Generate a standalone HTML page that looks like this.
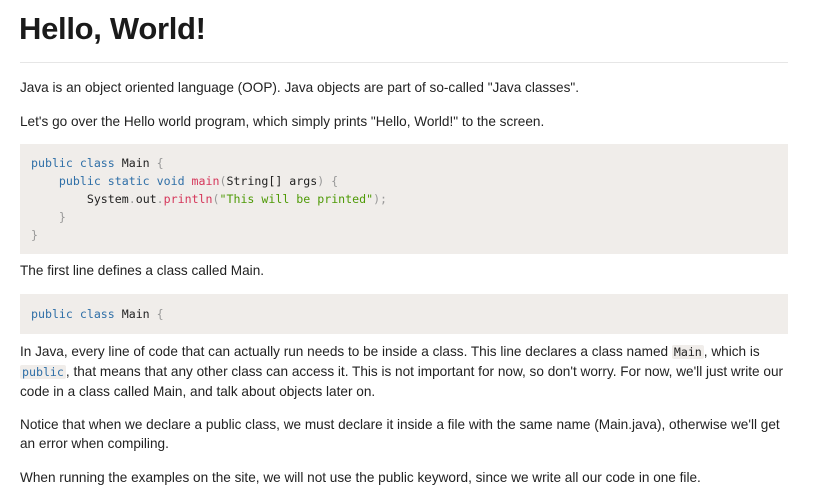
<!DOCTYPE html>
<html><head><style>
body{margin:0;background:#fff;width:819px;height:500px;overflow:hidden;font-family:"Liberation Sans",sans-serif;color:#222;}
.a{position:absolute;left:20px;white-space:nowrap;}
h1{position:absolute;left:19px;top:11px;margin:0;font-size:31px;font-weight:bold;letter-spacing:-0.3px;color:#1a1a1a;}
.hr{position:absolute;left:20px;top:62px;width:768px;height:1px;background:#e6e6e6;}
p{margin:0;font-size:13.6px;line-height:19px;}
.pre{position:absolute;left:20px;width:768px;background:#f0edea;}
.code{font-family:"DejaVu Sans Mono","Liberation Mono",monospace;font-size:11.6px;line-height:18px;white-space:pre;position:absolute;left:11px;color:#222;}
.k{color:#2f6fa7}.f{color:#d5365a}.s{color:#4e9a06}.g{color:#999}
.ic{font-family:"DejaVu Sans Mono",monospace;font-size:11.6px;background:#f0edea;padding:0 2px;border-radius:2px}
</style></head><body>
<h1>Hello, World!</h1>
<div class="hr"></div>
<p class="a" style="top:78px">Java is an object oriented language (OOP). Java objects are part of so-called "Java classes".</p>
<p class="a" style="top:112px">Let's go over the Hello world program, which simply prints "Hello, World!" to the screen.</p>
<div class="pre" style="top:144px;height:110px"><div class="code" style="top:10px"><span class="k">public class</span> Main <span class="g">{</span>
    <span class="k">public static void</span> <span class="f">main</span><span class="g">(</span>String[] args<span class="g">)</span> <span class="g">{</span>
        System<span class="g">.</span>out<span class="g">.</span><span class="f">println</span><span class="g">(</span><span class="s">"This will be printed"</span><span class="g">);</span>
    <span class="g">}</span>
<span class="g">}</span></div></div>
<p class="a" style="top:261px">The first line defines a class called Main.</p>
<div class="pre" style="top:294px;height:40px"><div class="code" style="top:11px"><span class="k">public class</span> Main <span class="g">{</span></div></div>
<p class="a" style="top:342px">In Java, every line of code that can actually run needs to be inside a class. This line declares a class named <span class="ic">Main</span>, which is<br><span class="ic k">public</span>, that means that any other class can access it. This is not important for now, so don't worry. For now, we'll just write our<br>code in a class called Main, and talk about objects later on.</p>
<p class="a" style="top:415px">Notice that when we declare a public class, we must declare it inside a file with the same name (Main.java), otherwise we'll get<br>an error when compiling.</p>
<p class="a" style="top:468px">When running the examples on the site, we will not use the public keyword, since we write all our code in one file.</p>
</body></html>
